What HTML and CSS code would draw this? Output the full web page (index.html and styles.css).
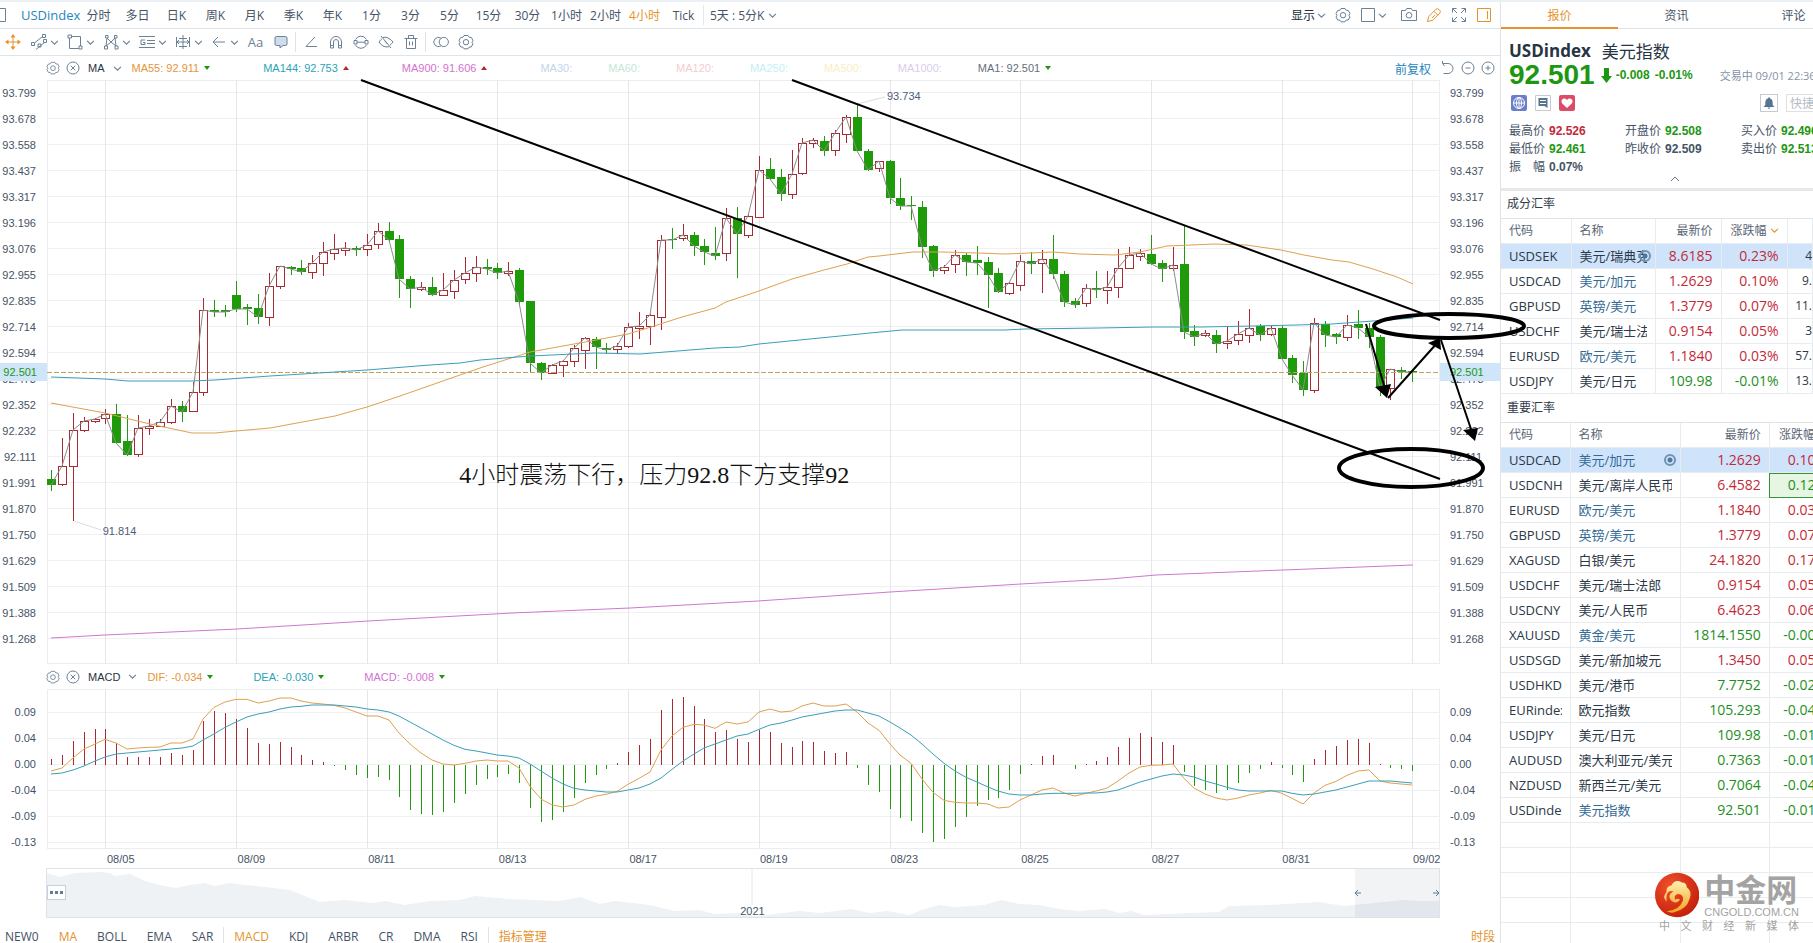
FILE: index.html
```html
<!DOCTYPE html>
<html lang="zh-CN">
<head>
    <meta charset="UTF-8">
    <meta name="viewport" content="width=device-width, initial-scale=1.0">
    <title>USDindex 美元指数</title>
    <link rel="stylesheet" href="styles.css">
</head>
<body>

    <!-- shared icons -->
    <svg class="sprite" aria-hidden="true">
        <symbol id="chev" viewBox="0 0 8 8"><path d="M1 2.5l3 3 3-3"/></symbol>
        <symbol id="gear" viewBox="0 0 16 16"><path d="M6 1.5h4l1.2 1.8 2.2.2 1.6 3.2-1.1 1.6L15 10l-1.8 3-2.1.1L10 14.8H6l-1.2-1.7-2.1-.1L1 10l1.1-1.7L1 6.6l1.7-3.1 2.1-.2z"/><circle cx="8" cy="8.2" r="2.7"/></symbol>
        <symbol id="close" viewBox="0 0 14 14"><circle cx="7" cy="7" r="6"/><path d="M4.7 4.7l4.6 4.6M9.3 4.7L4.7 9.3"/></symbol>
    </svg>

    <main class="main">
        <header class="topbar">
            <button class="frame-btn" aria-label="窗口"><svg width="7" height="14" viewBox="0 0 7 14"><path d="M0 .5h5.500v13H0"/></svg></button>
            <a class="symbol" href="#">USDindex</a>
            <nav class="periods">
                <button>分时</button>
                <button>多日</button>
                <button>日K</button>
                <button>周K</button>
                <button>月K</button>
                <button>季K</button>
                <button>年K</button>
                <button>1分</button>
                <button>3分</button>
                <button>5分</button>
                <button>15分</button>
                <button>30分</button>
                <button>1小时</button>
                <button>2小时</button>
                <button class="active">4小时</button>
                <button>Tick</button>
            </nav>
            <button class="custom">5天 : 5分K <svg class="chev"><use href="#chev"/></svg></button>
            <div class="top-actions">
                <button class="show">显示<svg class="chev"><use href="#chev"/></svg></button>
                <button aria-label="设置"><svg class="icon"><use href="#gear"/></svg></button>
                <button class="layout" aria-label="布局"><svg class="icon" viewBox="0 0 16 16"><path d="M1.500 1.500h13v13h-13z"/></svg><svg class="chev"><use href="#chev"/></svg></button>
                <button aria-label="截图"><svg class="icon" viewBox="0 0 16 16"><path d="M.5 3.500h4l1.200-2h4.600l1.200 2h4v10H.5z"/><circle cx="8" cy="8.300" r="2.800"/></svg></button>
                <button class="on" aria-label="画线"><svg class="icon" viewBox="0 0 16 16"><path d="M1.500 14.500l1.200-5L10 2.200q1.500-1.200 3 .3l.6.6q1.500 1.500.2 3L6.500 13.300zM8 4.300l4 4M6 11l3-3"/></svg></button>
                <button aria-label="全屏"><svg class="icon" viewBox="0 0 16 16"><path d="M5.500 1.500h-4v4M1.500 1.500l4.500 4.500M10.500 1.500h4v4M14.500 1.500L10 6M5.500 14.500h-4v-4M1.500 14.500L6 10M10.500 14.500h4v-4M14.500 14.500L10 10"/></svg></button>
                <button class="on" aria-label="侧栏"><svg class="icon" viewBox="0 0 16 16"><path d="M1.500 1.500h13v13h-13zM11.500 4v8"/></svg></button>
            </div>
        </header>

        <div class="tools">
            <button class="tool on" aria-label="移动"><svg class="icon" viewBox="0 0 16 16"><path d="M8 1v14M1 8h14"/><path class="solid" d="M8 0l2.500 3.500h-5zM8 16l2.500-3.500h-5zM0 8l3.500-2.500v5zM16 8l-3.500-2.500v5z"/></svg></button>
            <button class="tool drop" aria-label="直线"><svg class="icon" viewBox="0 0 16 16"><path d="M4 8.500L11 3M5 15.500L14 8M11.500.5h3v3h-3zM.5 8.500h3v3h-3zM12.500 5.500h3v3h-3zM7 10h3v3H7z"/></svg><svg class="chev"><use href="#chev"/></svg></button>
            <button class="tool drop" aria-label="矩形"><svg class="icon" viewBox="0 0 16 16"><path d="M2.500 4v10.500H12M4.500 2.500h9V12M1 1h3.500v3H1zM12 12h3v3h-3z"/></svg><svg class="chev"><use href="#chev"/></svg></button>
            <button class="tool drop" aria-label="形态"><svg class="icon" viewBox="0 0 16 16"><path d="M3 12L4 4l4 4 4-4 1 8-5-4zM1.500 12h3v3h-3zM2.500 1.500h2.500v2.500H2.500zM11.500 1.500h2.500v2.500h-2.500zM12 12h3v3h-3z"/></svg><svg class="chev"><use href="#chev"/></svg></button>
            <button class="tool drop" aria-label="斐波那契"><svg class="icon" viewBox="0 0 16 16"><path d="M0 2.500h16M8 6.500h8M8 9.500h8M0 13.500h16M6 6H2v4.500h4V8.500H4"/></svg><svg class="chev"><use href="#chev"/></svg></button>
            <button class="tool drop" aria-label="测量"><svg class="icon" viewBox="0 0 16 16"><path d="M8 1v14M1.500 3v10M14.500 3v10M2 8h12M4 4.500h8M4 12.500h8M4 6L2 8l2 2M12 6l2 2-2 2"/></svg><svg class="chev"><use href="#chev"/></svg></button>
            <button class="tool drop" aria-label="箭头"><svg class="icon" viewBox="0 0 16 16"><path d="M2 8h12M7 3L2 8l5 5"/></svg><svg class="chev"><use href="#chev"/></svg></button>
            <button class="tool text" aria-label="文字">Aa</button>
            <button class="tool" aria-label="注释"><svg class="icon bubble" viewBox="0 0 16 16"><path d="M3.500 2.500h9q1.500 0 1.500 1.500v6q0 1.500-1.500 1.500H10L7 14v-2.500H3.500Q2 11.500 2 10V4q0-1.500 1.500-1.500z"/></svg></button>
            <i class="rule"></i>
            <button class="tool" aria-label="角度"><svg class="icon" viewBox="0 0 16 16"><path d="M12 3L3 12.500h11"/></svg></button>
            <button class="tool" aria-label="磁铁"><svg class="icon" viewBox="0 0 16 16"><path d="M2.500 14V8a5.500 5.500 0 0 1 11 0v6h-3V8a2.500 2.500 0 0 0-5 0v6zM2.500 11.500h3M10.500 11.500h3"/></svg></button>
            <button class="tool" aria-label="连续"><svg class="icon" viewBox="0 0 16 16"><path d="M2.500 5.500a6.200 6.200 0 0 1 11 0M2.500 11a6.200 6.200 0 0 0 11 0M4 8.200h8M1 6.500h3V10H1zM12 6.500h3V10h-3z"/></svg></button>
            <button class="tool" aria-label="隐藏"><svg class="icon" viewBox="0 0 16 16"><path d="M3 2l10 12M5 3.500Q8 2.500 11 4.500q2.500 1.500 4 3.500-1.500 2-3 3.200M11 12.800Q8 13.500 5 12 2.500 10.500 1 8q1.500-2.200 3-3.300M6.500 6.500l3 3.500"/></svg></button>
            <button class="tool" aria-label="删除"><svg class="icon" viewBox="0 0 16 16"><path d="M1.500 4.500h13M5.500 4V1.500h5V4M3.500 5v9.500h9V5M6.500 7.500v4M9.500 7.500v4"/></svg></button>
            <i class="rule"></i>
            <button class="tool" aria-label="对比"><svg class="icon" viewBox="0 0 16 16"><path d="M8 4.200a4.600 4.600 0 1 0 0 7.600"/><circle cx="10.800" cy="8" r="4.600"/></svg></button>
            <button class="tool" aria-label="设置"><svg class="icon"><use href="#gear"/></svg></button>
        </div>

        <div class="legend">
            <button aria-label="指标设置"><svg class="icon small"><use href="#gear"/></svg></button>
            <button aria-label="关闭指标"><svg class="icon small"><use href="#close"/></svg></button>
            <button class="name">MA<svg class="chev"><use href="#chev"/></svg></button>
            <span class="ind orange down">MA55: 92.911</span>
            <span class="ind cyan up">MA144: 92.753</span>
            <span class="ind pink up">MA900: 91.606</span>
            <span class="ind off ma30">MA30:</span>
            <span class="ind off ma60">MA60:</span>
            <span class="ind off ma120">MA120:</span>
            <span class="ind off ma250">MA250:</span>
            <span class="ind off ma500">MA500:</span>
            <span class="ind off ma1000">MA1000:</span>
            <span class="ind gray down">MA1: 92.501</span>
            <div class="legend-right">
                <a href="#">前复权</a>
                <button aria-label="撤销"><svg class="icon small" viewBox="0 0 14 14"><path d="M1.500 2.500H7a4.700 4.700 0 0 1 0 10H2.500M1.500 0v2.500l2 2.500"/></svg></button>
                <button aria-label="缩小"><svg class="icon small" viewBox="0 0 14 14"><circle cx="7" cy="7" r="6"/><path d="M4.500 7h5"/></svg></button>
                <button aria-label="放大"><svg class="icon small" viewBox="0 0 14 14"><circle cx="7" cy="7" r="6"/><path d="M4.500 7h5M7 4.500v5"/></svg></button>
            </div>
        </div>

        <section class="pane price-pane">
            <div class="axis left" data-axis="price"></div>
            <div class="plot">
                <svg id="priceChart" viewBox="0 0 1393 584" preserveAspectRatio="none"></svg>
                <span class="mark high">93.734</span>
                <span class="mark low">91.814</span>
                <p class="note">4小时震荡下行，压力92.8下方支撑92</p>
                <svg class="drawing" viewBox="0 0 1393 584" preserveAspectRatio="none">
                    <path class="trend" d="M314 0L1393 399M745 0L1393 240"/>
                    <ellipse cx="1402" cy="246" rx="75" ry="12"/>
                    <ellipse cx="1364" cy="388" rx="72" ry="19"/>
                    <path class="arrow" d="M1319 244L1339 312M1341 318L1391 262M1394 260L1426 355"/>
                    <path class="head" d="M1328 307l16-3-4 14zM1393 258l1 12-13-7zM1416 350l15-2-3 13z"/>
                </svg>
            </div>
            <div class="axis right" data-axis="price"></div>
        </section>

        <div class="legend macd-legend">
            <button aria-label="指标设置"><svg class="icon small"><use href="#gear"/></svg></button>
            <button aria-label="关闭指标"><svg class="icon small"><use href="#close"/></svg></button>
            <button class="name">MACD<svg class="chev"><use href="#chev"/></svg></button>
            <span class="ind orange down">DIF: -0.034</span>
            <span class="ind cyan down">DEA: -0.030</span>
            <span class="ind pink down">MACD: -0.008</span>
        </div>

        <section class="pane macd-pane">
            <div class="axis left" data-axis="macd"></div>
            <div class="plot"><svg id="macdChart" viewBox="0 0 1393 160" preserveAspectRatio="none"></svg></div>
            <div class="axis right" data-axis="macd"></div>
        </section>

        <div class="dates">
            <span>08/05</span><span>08/09</span><span>08/11</span><span>08/13</span><span>08/17</span><span>08/19</span><span>08/23</span><span>08/25</span><span>08/27</span><span>08/31</span><span>09/02</span>
        </div>

        <section class="navigator">
            <svg id="navChart" viewBox="0 0 1393 48" preserveAspectRatio="none"></svg>
            <button class="more" aria-label="更多"><svg width="13" height="3" viewBox="0 0 13 3"><path d="M0 0h3v3H0zM5 0h3v3H5zM10 0h3v3h-3z"/></svg></button>
            <span class="year">2021</span>
            <div class="range"><svg width="6" height="6" viewBox="0 0 6 6"><path d="M0 3h6M3 0L0 3l3 3"/></svg><svg width="6" height="6" viewBox="0 0 6 6"><path d="M0 3h6M3 0l3 3-3 3"/></svg></div>
        </section>

        <footer class="indicators">
            <button>NEW0</button>
            <button class="active">MA</button>
            <button>BOLL</button>
            <button>EMA</button>
            <button>SAR</button>
            <i class="rule"></i>
            <button class="active">MACD</button>
            <button>KDJ</button>
            <button>ARBR</button>
            <button>CR</button>
            <button>DMA</button>
            <button>RSI</button>
            <i class="rule"></i>
            <button class="active">指标管理</button>
            <button class="active session">时段</button>
        </footer>
    </main>

    <aside class="side">
        <nav class="side-tabs">
            <button class="active">报价</button>
            <button>资讯</button>
            <button>评论</button>
        </nav>

        <div class="quote">
            <h1>USDindex <span>美元指数</span></h1>
            <div class="last">
                <strong>92.501</strong>
                <svg width="11" height="15" viewBox="0 0 11 15"><path d="M3 0h5v8h3l-5.500 7L0 8h3z"/></svg>
                <b>-0.008</b>
                <b>-0.01%</b>
                <time>交易中 09/01 22:36</time>
            </div>
            <div class="badges">
                <svg width="16" height="16" viewBox="0 0 16 16"><rect width="16" height="16" rx="2" fill="#6b7fc8"/><g fill="none" stroke="#fff"><circle cx="8" cy="8" r="5.500"/><ellipse cx="8" cy="8" rx="2.500" ry="5.500"/><path d="M2.500 8h11M8 2.500v11"/></g></svg>
                <svg width="16" height="16" viewBox="0 0 16 16"><path fill="#fff" stroke="#c3ccd4" d="M.5.5h15v15H.5z"/><path fill="#54758f" d="M3.500 3h9v10l-3-2h-6z"/><path stroke="#fff" d="M5 5.500h6M5 8.500h6"/></svg>
                <svg width="16" height="16" viewBox="0 0 16 16"><rect width="16" height="16" rx="2" fill="#dc4c66"/><path fill="#fff" d="M8 13L3 8.200Q1.500 5.800 3.300 4.200 5.800 2.500 8 5q2.200-2.500 4.700-.8 1.800 1.600.3 4z"/></svg>
                <button class="bell" aria-label="提醒"><svg width="12" height="12" viewBox="0 0 12 12"><path d="M6 0l1 1.200q2.700 1 2.700 4V8l1.800 2H.5l1.800-2V5.200q0-3 2.700-4zM4.500 10.500h3L6 12z"/></svg></button>
                <input type="text" placeholder="快捷" aria-label="快捷">
            </div>
            <dl class="stats">
                <div><dt>最高价</dt><dd class="red">92.526</dd></div>
                <div><dt>开盘价</dt><dd class="green">92.508</dd></div>
                <div><dt>买入价</dt><dd class="green">92.496</dd></div>
                <div><dt>最低价</dt><dd class="green">92.461</dd></div>
                <div><dt>昨收价</dt><dd>92.509</dd></div>
                <div><dt>卖出价</dt><dd class="green">92.513</dd></div>
                <div><dt>振　幅</dt><dd>0.07%</dd></div>
            </dl>
            <button class="fold" aria-label="收起"><svg width="10" height="6" viewBox="0 0 10 6"><path d="M1 5l4-4 4 4"/></svg></button>
        </div>

        <h2>成分汇率</h2>
        <table class="rates parts">
            <colgroup><col class="c1"><col class="c2"><col class="c3"><col class="c4"><col></colgroup>
            <thead>
                <tr><th>代码</th><th>名称</th><th>最新价</th><th>涨跌幅<svg class="chev"><use href="#chev"/></svg></th><th></th></tr>
            </thead>
            <tbody>
                <tr class="selected"><td><span>USDSEK</span></td><td><span>美元/瑞典克</span><i class="eye"></i></td><td class="red">8.6185</td><td class="red">0.23%</td><td>4</td></tr>
                <tr><td><span>USDCAD</span></td><td class="blue"><span>美元/加元</span></td><td class="red">1.2629</td><td class="red">0.10%</td><td>9.</td></tr>
                <tr><td><span>GBPUSD</span></td><td class="blue"><span>英镑/美元</span></td><td class="red">1.3779</td><td class="red">0.07%</td><td>11.</td></tr>
                <tr><td><span>USDCHF</span></td><td><span>美元/瑞士法郎</span></td><td class="red">0.9154</td><td class="red">0.05%</td><td>3</td></tr>
                <tr><td><span>EURUSD</span></td><td class="blue"><span>欧元/美元</span></td><td class="red">1.1840</td><td class="red">0.03%</td><td>57.</td></tr>
                <tr><td><span>USDJPY</span></td><td><span>美元/日元</span></td><td class="green">109.98</td><td class="green">-0.01%</td><td>13.</td></tr>
            </tbody>
        </table>

        <h2>重要汇率</h2>
        <table class="rates major">
            <colgroup><col class="c1"><col class="c2"><col class="c3"><col class="c4"></colgroup>
            <thead>
                <tr><th>代码</th><th>名称</th><th>最新价</th><th>涨跌幅<svg class="chev"><use href="#chev"/></svg></th></tr>
            </thead>
            <tbody>
                <tr class="selected"><td><span>USDCAD</span></td><td class="blue"><span>美元/加元</span><i class="eye"></i></td><td class="red">1.2629</td><td class="red">0.10%</td></tr>
                <tr><td><span>USDCNH</span></td><td><span>美元/离岸人民币</span></td><td class="red">6.4582</td><td class="green flash">0.12%</td></tr>
                <tr><td><span>EURUSD</span></td><td class="blue"><span>欧元/美元</span></td><td class="red">1.1840</td><td class="red">0.03%</td></tr>
                <tr><td><span>GBPUSD</span></td><td class="blue"><span>英镑/美元</span></td><td class="red">1.3779</td><td class="red">0.07%</td></tr>
                <tr><td><span>XAGUSD</span></td><td><span>白银/美元</span></td><td class="red">24.1820</td><td class="red">0.17%</td></tr>
                <tr><td><span>USDCHF</span></td><td><span>美元/瑞士法郎</span></td><td class="red">0.9154</td><td class="red">0.05%</td></tr>
                <tr><td><span>USDCNY</span></td><td><span>美元/人民币</span></td><td class="red">6.4623</td><td class="red">0.06%</td></tr>
                <tr><td><span>XAUUSD</span></td><td class="blue"><span>黄金/美元</span></td><td class="green">1814.1550</td><td class="green">-0.00%</td></tr>
                <tr><td><span>USDSGD</span></td><td><span>美元/新加坡元</span></td><td class="red">1.3450</td><td class="red">0.05%</td></tr>
                <tr><td><span>USDHKD</span></td><td><span>美元/港币</span></td><td class="green">7.7752</td><td class="green">-0.02%</td></tr>
                <tr><td><span>EURindex</span></td><td><span>欧元指数</span></td><td class="green">105.293</td><td class="green">-0.04%</td></tr>
                <tr><td><span>USDJPY</span></td><td><span>美元/日元</span></td><td class="green">109.98</td><td class="green">-0.01%</td></tr>
                <tr><td><span>AUDUSD</span></td><td><span>澳大利亚元/美元</span></td><td class="green">0.7363</td><td class="green">-0.01%</td></tr>
                <tr><td><span>NZDUSD</span></td><td><span>新西兰元/美元</span></td><td class="green">0.7064</td><td class="green">-0.04%</td></tr>
                <tr><td><span>USDindex</span></td><td class="blue"><span>美元指数</span></td><td class="green">92.501</td><td class="green">-0.01%</td></tr>
                <tr><td></td><td></td><td></td><td></td></tr>
                <tr><td></td><td></td><td></td><td></td></tr>
                <tr><td></td><td></td><td></td><td></td></tr>
                <tr><td></td><td></td><td></td><td></td></tr>
                <tr><td></td><td></td><td></td><td></td></tr>
            </tbody>
        </table>

        <div class="brand">
            <div class="brand-top">
                <svg width="46" height="46" viewBox="0 0 46 46">
                    <defs>
                        <radialGradient id="ball" cx="35%" cy="30%" r="75%"><stop offset="0" stop-color="#f0502a"/><stop offset="1" stop-color="#c41f0c"/></radialGradient>
                        <linearGradient id="gold" x2="0" y2="1"><stop offset="0" stop-color="#fff0b0"/><stop offset="1" stop-color="#f2a51c"/></linearGradient>
                    </defs>
                    <circle cx="23" cy="23" r="23" fill="url(#ball)"/>
                    <path fill="url(#gold)" d="M12 30Q7 25 12 20q-1-6 5-7 4-7 11-3 5 0 5 5 6 4 3 12-3 11-16 14-3 1-8-1 13-1 17-11 1-7-5-7-5 1-3 6 3-2 5 0-4 5-9 1-5-5 2-10-6-1-7 5z"/>
                </svg>
                <div>
                    <strong>中金网</strong>
                    <small>CNGOLD.COM.CN</small>
                </div>
            </div>
            <p><span>中</span><span>文</span><span>财</span><span>经</span><span>新</span><span>媒</span><span>体</span></p>
        </div>
    </aside>

    <script src="script.js"></script>
</body>
</html>
```
FILE: styles.css
```css
* {
    margin: 0;
    padding: 0;
    box-sizing: border-box;
}

body {
    display: flex;
    height: 100vh;
    overflow: hidden;
    background: #fff;
    border-top: 2px solid #eaf0f4;
    color: #465366;
    font-family: "Open Sans", "Noto Sans CJK SC", sans-serif;
    font-size: 12px;
}

button {
    display: flex;
    align-items: center;
    justify-content: center;
    background: none;
    border: none;
    color: inherit;
    font: inherit;
    white-space: nowrap;
    cursor: pointer;
}

a {
    color: #1f86bd;
    text-decoration: none;
}

.sprite {
    position: absolute;
    width: 0;
    height: 0;
}

.icon,
.chev {
    flex: none;
    width: 16px;
    height: 16px;
    fill: none;
    stroke: #6b8196;
}

.icon.small {
    width: 14px;
    height: 14px;
}

.chev {
    width: 9px;
    height: 9px;
}

.on .icon {
    stroke: #e5932c;
}

.on .solid {
    fill: #e5932c;
    stroke: none;
}

.rule {
    flex: none;
    width: 1px;
    height: 20px;
    background: #dfe4e8;
}

.red { color: #c22a38; }
.green { color: #1d9712; }
.blue { color: #336a96; }

/* left part */
.main {
    position: relative;
    z-index: 1;
    flex: 1;
    min-width: 0;
    display: flex;
    flex-direction: column;
}

.topbar,
.tools {
    flex: none;
    display: flex;
    align-items: center;
    height: 27px;
    border-bottom: 1px solid #e0e4e8;
}

.frame-btn svg {
    fill: none;
    stroke: #6b8196;
}

.symbol {
    width: 72px;
    padding-left: 14px;
    font-size: 13px;
}

.periods {
    display: flex;
    border-right: 1px solid #e4e8eb;
}

.periods button {
    width: 39px;
    height: 20px;
}

.active {
    color: #e5932c;
}

.custom {
    gap: 4px;
    margin-left: 6px;
}

.top-actions {
    display: flex;
    align-items: center;
    gap: 9px;
    margin-left: auto;
    padding-right: 8px;
}

.top-actions .show {
    gap: 2px;
    color: #222c38;
}

.layout {
    gap: 2px;
    margin-right: 5px;
}

.tool {
    width: 25px;
    height: 24px;
}

.tool.drop {
    gap: 3px;
    width: 36px;
}

.tool.text {
    color: #6b8196;
    font-size: 13px;
}

.bubble {
    fill: #cfdcee;
}

.tool:first-child {
    margin-right: 2px;
}

.tools .rule {
    margin: 0 2px;
}

.legend {
    flex: none;
    display: flex;
    align-items: center;
    height: 24px;
    padding-left: 46px;
    font-family: "Liberation Sans", "Noto Sans CJK SC", sans-serif;
    font-size: 11px;
    white-space: nowrap;
}

.legend button + button {
    margin-left: 6px;
}

.legend .name {
    gap: 8px;
    margin: 0 10px 0 8px;
    color: #2b3440;
}

.ind {
    display: flex;
    align-items: center;
    gap: 5px;
    margin-right: 53px;
}

.ind.off {
    margin-right: 36px;
}

.macd-legend {
    height: 25px;
}

.macd-legend .ind {
    margin-right: 40px;
}

.ind.up::after,
.ind.down::after {
    content: "";
    border: 3px solid transparent;
}

.ind.up::after {
    border-top: none;
    border-bottom: 4px solid #b7282e;
}

.ind.down::after {
    border-bottom: none;
    border-top: 4px solid #219514;
}

.orange { color: #e3963a; }
.cyan { color: #2ba3b8; }
.pink { color: #d372cf; }
.gray { color: #66707c; }
.ma30 { color: #c2d5ea; }
.ma60 { color: #c3e8d6; }
.ma120 { color: #f3cdd2; }
.ma250 { color: #c2f0f4; }
.ma500 { color: #f8eec4; }
.ma1000 { color: #d9cdea; }

.legend-right {
    display: flex;
    align-items: center;
    margin-left: auto;
    padding-right: 5px;
}

.legend-right a {
    margin-right: 10px;
    font-size: 12px;
}

/* charts */
.pane {
    display: flex;
    font-family: "Liberation Sans", sans-serif;
    font-size: 11px;
}

.price-pane {
    flex: 1;
    min-height: 0;
}

.macd-pane {
    flex: none;
    height: 160px;
}

.plot {
    position: relative;
    flex: 1;
    min-width: 0;
    box-shadow: inset 0 0 0 1px #ebedf0;
}

.plot svg {
    display: block;
    position: absolute;
    width: 100%;
    height: 100%;
}

.axis {
    position: relative;
    flex: none;
    display: flex;
    flex-direction: column;
    width: 47px;
    padding: 0 11px 12px 0;
    text-align: right;
}

.axis.right {
    width: 60px;
    padding: 0 0 12px 10px;
    text-align: left;
}

.axis span {
    flex: 1;
    display: flex;
    align-items: center;
    justify-content: flex-end;
    line-height: 12px;
}

.axis.right span {
    justify-content: flex-start;
}

.macd-pane .axis {
    padding-top: 10px;
    padding-bottom: 0;
}

.macd-pane .axis span {
    flex: none;
    height: 26px;
}

.axis .tag {
    position: absolute;
    left: 0;
    right: 0;
    top: 48.5%;
    height: 18px;
    padding: 0 10px;
    background: #cfe5f9;
    color: #1d9712;
}

.mark {
    position: absolute;
    line-height: 14px;
    color: #4e5d78;
}

.mark.high {
    left: 60.3%;
    top: 1.5%;
}

.mark.low {
    left: 4%;
    top: 76%;
}

.note {
    position: absolute;
    left: 29.6%;
    top: 64.8%;
    color: #111;
    font-family: "Liberation Serif", "Noto Sans CJK SC", serif;
    font-size: 24px;
    font-weight: 300;
    line-height: 34px;
    white-space: nowrap;
}

.plot .drawing {
    z-index: 2;
    overflow: visible;
    fill: none;
    stroke: #000;
    stroke-width: 2;
    pointer-events: none;
}

.drawing ellipse {
    stroke-width: 4;
}

.plot .drawing .head {
    fill: #000;
    stroke: none;
}

.grid { fill: none; stroke: #eff0f2; shape-rendering: crispEdges; }
.grid.v { stroke: #e4e6ea; }
.line { fill: none; stroke-width: 1; }
.line.ma55 { stroke: #e0a050; }
.line.ma144 { stroke: #3a9fb8; }
.line.ma900 { stroke: #cf78cc; }
.line.close { stroke: #8c8c8c; }
.line.leader { stroke: #d8dde4; }
.now { fill: none; stroke: #c5a25a; stroke-dasharray: 5 2; shape-rendering: crispEdges; }
.rise { fill: none; stroke: #a82b34; shape-rendering: crispEdges; }
.rise.box { fill: #fff; }
.fall { fill: none; stroke: #229a10; shape-rendering: crispEdges; }
.fall.box { fill: #1f9a0a; stroke: none; }

.dates {
    flex: none;
    display: flex;
    height: 19px;
    margin: 0 60px 0 47px;
    padding-left: 60px;
    font-family: "Liberation Sans", sans-serif;
    font-size: 11px;
    line-height: 20px;
}

.dates span {
    flex: 1;
    min-width: 0;
}

.dates span:last-child {
    flex: none;
    width: 27px;
}

.navigator {
    position: relative;
    flex: none;
    height: 50px;
    margin: 0 60px 0 46px;
    border: 1px solid #dfe3e7;
    font-family: "Liberation Sans", sans-serif;
    font-size: 11px;
}

.navigator > svg {
    display: block;
    width: 100%;
    height: 100%;
}

.area { fill: #eef2f5; }

.more {
    position: absolute;
    left: 0;
    top: 16px;
    width: 19px;
    height: 15px;
    background: #fff;
    border: 1px solid #c5d0d8;
}

.more svg {
    fill: #5f7f96;
}

.year {
    position: absolute;
    left: 49.8%;
    bottom: 0;
    line-height: 12px;
}

.range {
    position: absolute;
    top: 0;
    right: 0;
    bottom: 0;
    width: 6%;
    display: flex;
    align-items: center;
    justify-content: space-between;
    background: rgba(120, 135, 155, 0.1);
}

.range svg {
    fill: none;
    stroke: #5f7790;
}

.indicators {
    flex: none;
    display: flex;
    align-items: flex-end;
    height: 25px;
    padding-right: 5px;
    line-height: 12px;
}

.indicators button {
    padding: 0 10px;
}

.indicators button:first-child {
    padding-left: 5px;
}

.indicators .rule {
    height: 16px;
}

.indicators .session {
    margin-left: auto;
    padding: 0;
}

/* right part */
.side {
    position: relative;
    flex: none;
    width: 313px;
    overflow: hidden;
    border-left: 1px solid #dfe3e7;
}

.side-tabs {
    display: flex;
    width: 351px;
    height: 27px;
    border-bottom: 1px solid #e0e4e8;
}

.side-tabs button {
    flex: 1;
    height: 27px;
    border-bottom: 2px solid transparent;
}

.side-tabs .active {
    border-bottom-color: #e5932c;
}

.quote {
    height: 162px;
    padding: 9px 0 0 8px;
    border-bottom: 3px solid #e6e8eb;
}

.quote h1 {
    display: flex;
    align-items: center;
    gap: 11px;
    height: 24px;
    color: #273444;
    font-size: 17px;
}

.quote h1 span {
    font-weight: 400;
}

.last {
    display: flex;
    align-items: center;
    height: 26px;
    color: #1d9712;
    font-family: "Liberation Sans", "Noto Sans CJK SC", sans-serif;
    white-space: nowrap;
}

.last strong {
    font-size: 28px;
}

.last svg {
    flex: none;
    margin: 0 4px 0 6px;
    fill: #1d9712;
}

.last b {
    margin-right: 5px;
}

.last time {
    margin-left: 22px;
    color: #8492a6;
    font-family: "Open Sans", "Noto Sans CJK SC", sans-serif;
    font-size: 11px;
}

.badges {
    display: flex;
    align-items: center;
    gap: 8px;
    height: 30px;
    padding-left: 2px;
}

.badges svg {
    flex: none;
}

.bell {
    flex: none;
    width: 18px;
    height: 18px;
    margin-left: 177px;
    border: 1px solid #c3ccd4;
}

.bell svg {
    fill: #54758f;
}

.badges input {
    flex: none;
    width: 60px;
    height: 18px;
    padding-left: 3px;
    border: 1px solid #dde1e5;
    font: inherit;
}

.badges input::placeholder {
    color: #b5bcc4;
}

.stats {
    display: grid;
    grid-template-columns: repeat(3, 116px);
    padding-top: 4px;
    line-height: 18px;
}

.stats div {
    display: flex;
    gap: 4px;
}

.stats dd {
    font-family: "Liberation Sans", sans-serif;
    font-weight: 700;
}

.fold {
    width: 332px;
}

.fold svg {
    fill: none;
    stroke: #6b7886;
}

.side h2 {
    height: 28px;
    padding-left: 6px;
    border-bottom: 1px solid #e0e4e8;
    color: #2f3b4a;
    font-size: 12px;
    font-weight: 400;
    line-height: 26px;
}

.rates {
    width: 335px;
    border-collapse: collapse;
    table-layout: fixed;
    color: #2c3948;
    font-size: 13px;
    white-space: nowrap;
}

.rates.parts {
    width: 312px;
    margin-bottom: 1px;
}

.parts .c1 { width: 70px; }
.parts .c2 { width: 84px; }
.parts .c3 { width: 66px; }
.parts .c4 { width: 66px; }
.major .c1 { width: 69px; }
.major .c2 { width: 110px; }
.major .c3 { width: 89px; }
.major .c4 { width: 66px; }

.rates tr {
    height: 25px;
    border-bottom: 1px solid #e9ecef;
}

.parts thead tr {
    height: 24px;
}

.rates th,
.rates td {
    position: relative;
    padding: 0 8px;
    border-right: 1px solid #e9ecef;
    line-height: 20px;
    text-align: right;
}

.rates td:nth-child(n+3) {
    font-size: 14px;
}

.rates th {
    color: #5a6675;
    font-size: 12px;
    font-weight: 400;
}

.rates th .chev {
    margin-left: 3px;
    stroke: #e5932c;
}

.rates th:nth-child(-n+2),
.rates td:nth-child(-n+2) {
    text-align: left;
}

.parts th:nth-child(5),
.parts td:nth-child(5) {
    padding: 0;
    font-size: 12px;
}

.rates td span {
    display: block;
    overflow: hidden;
}

.selected {
    background: #cfe4fb;
}

.rates .red { color: #c22a38; }
.rates .green { color: #1d8f22; }
.rates .blue { color: #336a96; }

.rates .flash {
    background: #e6f6e2;
    outline: 1px solid #35933a;
    outline-offset: -1px;
}

.eye {
    position: absolute;
    top: 6px;
    right: 4px;
    width: 12px;
    height: 12px;
    border: 2px solid #6f93b3;
    border-radius: 50%;
    background: radial-gradient(#4f779b 2px, transparent 3px);
}

.brand {
    position: absolute;
    right: 14px;
    bottom: 9px;
    width: 140px;
    color: #a3a3a3;
}

.brand-top {
    display: flex;
    gap: 5px;
    margin-left: -4px;
}

.brand-top div {
    display: flex;
    flex-direction: column;
}

.brand strong {
    font-size: 31px;
    font-weight: 700;
    line-height: 34px;
}

.brand small {
    font-family: "Liberation Sans", sans-serif;
    font-size: 11px;
    line-height: 12px;
}

.brand p {
    display: flex;
    justify-content: space-between;
    font-size: 11px;
    line-height: 16px;
}
```
FILE: script.js
```js
const STEP = 10.89;
const FIRST = 4;

const axes = {
    price: ["93.799", "93.678", "93.558", "93.437", "93.317", "93.196", "93.076", "92.955", "92.835", "92.714", "92.594",
        "92.473", "92.352", "92.232", "92.111", "91.991", "91.870", "91.750", "91.629", "91.509", "91.388", "91.268"],
    macd: ["0.09", "0.04", "0.00", "-0.04", "-0.09", "-0.13"]
};

// type, high, body top, body bottom, low
const candles = `
g 470 479 485 491|r 438 466 484 486|r 413 430 466 521|r 417 421 430 432|r 418 419 421 423|r 409 414 418 424
g 404 414 443 443|g 415 441 455 456|r 415 428 454 457|r 419 426 428 435|r 419 422 426 427|r 399 406 422 424
g 401 406 412 422|r 382 392 411 412|r 298 310 392 396|g 300 310 312 317|g 305 310 312 317|g 281 295 309 312
g 304 307 309 325|g 294 308 317 324|r 273 286 317 326|r 266 266 286 289|g 266 267 269 275|g 260 268 272 275
r 255 263 272 279|r 242 252 263 276|r 234 249 253 260|r 242 248 250 256|g 246 248 250 256|r 234 245 249 256
r 223 231 244 249|g 222 231 240 242|g 235 239 279 298|g 276 279 289 308|r 282 287 289 291|g 277 287 295 296
r 273 290 295 296|r 270 280 291 299|r 257 273 279 284|r 256 267 273 282|g 259 267 269 275|g 263 268 273 279
r 262 271 273 276|g 268 270 302 306|g 301 301 363 372|g 362 363 373 380|r 364 365 373 373|r 360 361 365 377
r 345 348 361 367|r 337 338 350 369|g 337 339 347 369|g 343 348 350 354|r 343 346 349 353|r 323 327 346 348
r 312 326 328 339|r 314 315 326 345|r 235 240 317 330|g 228 239 240 249|r 224 235 238 241|g 232 235 246 256
g 239 246 252 265|g 227 253 256 260|r 208 218 253 261|g 207 218 234 278|r 215 216 235 238|r 156 170 217 218
g 158 169 179 180|g 169 177 194 201|r 150 174 194 199|r 138 143 173 175|r 138 140 143 148|g 136 141 151 156
r 130 133 150 156|r 115 117 134 143|g 105 117 151 151|g 149 151 170 171|r 161 161 168 172|g 160 161 198 204
g 178 198 206 210|g 196 205 206 220|g 201 207 247 258|g 245 246 271 277|r 265 267 270 274|r 250 255 264 273
g 253 255 262 276|g 246 260 263 275|g 257 262 275 308|g 268 273 292 293|r 282 283 293 295|r 255 261 285 291
g 252 261 264 274|r 250 259 263 293|g 235 259 274 279|g 271 274 302 307|g 298 301 305 308|r 284 288 303 307
g 271 288 290 298|r 271 287 290 304|r 249 268 287 298|r 247 255 268 269|r 249 253 256 261|g 235 254 264 265
g 260 263 269 282|r 247 265 268 271|g 225 264 332 339|g 325 331 337 346|r 330 333 335 337|g 330 335 344 353
r 327 341 343 349|r 321 334 340 345|r 309 328 335 343|g 324 326 335 341|r 325 328 334 336|g 326 328 359 359
g 355 358 375 383|g 361 373 390 396|r 318 323 390 393|g 321 324 335 347|g 333 334 337 344|r 315 325 337 341
g 310 324 328 339|g 323 328 337 348|g 335 337 388 396|r 369 369 388 400|g 367 370 372 379|g 370 371 372 382
`.trim().split(/[|\n]/).map(row => {
    const [type, ...v] = row.split(" ");
    return [type, ...v.map(n => n - 80)];
});

const ma55 = "4,323 58,333 103,344 145,353 168,353 189,351 223,348 288,336 320,327 353,316 393,302 433,288 483,272 549,260 581,254 604,247 635,237 668,228 679,222 712,211 745,199 777,190 800,184 821,177 832,176 866,172 896,172 930,173 958,174 1006,172 1033,174 1068,175 1093,172 1120,166 1168,164 1199,165 1234,170 1257,175 1285,180 1302,182 1326,189 1350,197 1366,204";
const ma144 = "4,297 58,299 81,301 143,301 168,300 223,296 320,290 383,285 413,283 433,280 483,276 548,273 593,274 668,268 693,267 712,264 783,257 823,253 855,250 958,250 978,249 1051,248 1106,247 1154,247 1206,246 1250,245 1285,244 1326,241 1366,238";
const ma900 = "4,558 58,555 190,549 321,541 465,533 583,528 711,521 843,512 974,504 1063,499 1109,495 1236,490 1366,485";

const macd = [6, 10, 24, 33, 36, 36, 22, 8, 8, 8, 8, 12, 10, 15, 44, 54, 52, 46, 37, 22, 21, 23, 18, 10, 5, 3, -1, -5, -10, -13,
    -12, -15, -32, -45, -49, -50, -47, -38, -29, -20, -14, -12, -9, -18, -43, -57, -55, -47, -33, -18, -10, -4, 2, 13, 20, 26,
    55, 66, 68, 59, 46, 33, 35, 26, 23, 35, 33, 22, 18, 24, 23, 14, 12, 13, -3, -20, -27, -44, -53, -56, -68, -77, -74, -62,
    -52, -41, -35, -33, -25, -9, 1, 9, 10, 0, -4, 1, 4, 8, 18, 27, 32, 28, 23, 20, -7, -21, -25, -28, -25, -18, -8, -4, 3, -3,
    -10, -17, 6, 15, 19, 25, 26, 22, 1, -3, -4, -6];

const dif = [361, 352, 322, 295, 280, 266, 277, 295, 292, 290, 289, 277, 277, 265, 205, 170, 154, 146, 146, 157, 151, 142, 142,
    151, 157, 160, 164, 172, 184, 196, 196, 208, 247, 280, 307, 328, 340, 343, 338, 331, 328, 331, 331, 352, 407, 445, 463, 469,
    463, 446, 436, 431, 422, 401, 383, 364, 298, 256, 230, 221, 223, 233, 214, 220, 214, 184, 175, 184, 181, 166, 157, 166, 166,
    160, 184, 217, 239, 280, 313, 338, 385, 425, 449, 455, 457, 457, 460, 472, 469, 448, 433, 418, 412, 427, 436, 428, 421, 412,
    391, 367, 349, 344, 343, 340, 383, 412, 430, 442, 448, 442, 433, 427, 419, 428, 443, 460, 427, 404, 392, 374, 361, 358, 391,
    397, 400, 403];

const dea = [370, 367, 358, 346, 331, 319, 310, 307, 304, 301, 298, 295, 292, 286, 268, 250, 230, 214, 199, 190, 184, 175, 169,
    167, 163, 163, 163, 166, 169, 175, 178, 184, 196, 214, 232, 250, 268, 284, 296, 301, 307, 313, 316, 322, 340, 361, 382, 400,
    413, 418, 421, 424, 424, 418, 412, 400, 382, 356, 331, 310, 292, 280, 268, 256, 250, 236, 223, 217, 208, 199, 193, 187, 181,
    178, 178, 187, 196, 214, 232, 253, 280, 310, 338, 361, 380, 394, 409, 421, 430, 433, 433, 430, 428, 428, 428, 427, 427, 424,
    418, 406, 394, 385, 376, 370, 373, 379, 391, 400, 410, 418, 421, 421, 421, 421, 428, 433, 430, 424, 418, 409, 400, 391, 391,
    391, 394, 397];

// overview outline, x then y
const overview = [0, 4, 13, 8, 28, 4, 53, 3, 63, 4, 68, 7, 83, 5, 98, 12, 113, 16, 129, 19, 143, 16, 158, 14, 168, 17, 183, 14,
    198, 16, 218, 18, 243, 21, 258, 27, 273, 33, 298, 31, 325, 34, 338, 32, 358, 36, 383, 32, 413, 31, 428, 27, 463, 30, 513, 32,
    534, 28, 553, 35, 568, 32, 603, 36, 628, 42, 653, 41, 668, 45, 693, 44, 710, 47, 728, 45, 753, 42, 773, 44, 805, 40, 823, 44,
    841, 42, 863, 46, 878, 40, 893, 36, 908, 38, 938, 36, 955, 31, 973, 35, 993, 36, 1013, 40, 1033, 42, 1058, 40, 1073, 44,
    1085, 42, 1098, 46, 1123, 45, 1143, 44, 1173, 43, 1183, 37, 1223, 36, 1273, 33, 1298, 37, 1328, 34, 1358, 31, 1373, 32, 1393, 32];

const xAt = i => Math.round(FIRST + i * STEP);

function gridLines(top, rows, height) {
    let h = "", v = "";
    for (let r = 0; r < rows; r++) h += `M0 ${top + r * 26}.5H1393`;
    for (let i = 5; i < 126; i += 12) v += `M${xAt(i)}.5 0V${height}`;
    return `<path class="grid" d="${h}"/><path class="grid v" d="${v}"/>`;
}

function drawPrice() {
    let out = gridLines(12, 22, 584);
    const closes = [];
    candles.forEach(([type, high, top, bottom, low], i) => {
        const x = xAt(i);
        const h = Math.max(bottom - top, 1);
        if (type === "g") {
            out += `<path class="fall" d="M${x}.5 ${high}V${low}"/><rect class="fall box" x="${x - 4}" y="${top}" width="9" height="${h}"/>`;
            closes.push(`${x},${bottom}`);
        } else {
            out += `<path class="rise" d="M${x}.5 ${high}V${low}"/><rect class="rise box" x="${x - 3.5}" y="${top + 0.5}" width="8" height="${h}"/>`;
            closes.push(`${x},${top}`);
        }
    });
    out += `<path class="now" d="M0 292.500H1393"/>`;
    out += `<path class="line leader" d="M810 24L838 17M27 441L54 450"/>`;
    out += `<polyline class="line close" points="${closes.join(" ")}"/>`;
    out += `<polyline class="line ma55" points="${ma55}"/>`;
    out += `<polyline class="line ma144" points="${ma144}"/>`;
    out += `<polyline class="line ma900" points="${ma900}"/>`;
    document.getElementById("priceChart").innerHTML = out;
}

function drawMacd() {
    let out = gridLines(23, 6, 160);
    macd.forEach((v, i) => {
        if (v) out += `<path class="${v > 0 ? "rise" : "fall"}" d="M${xAt(i)}.5 76v${-v}"/>`;
    });
    const points = list => list.map((v, i) => `${xAt(i)},${(v - 115) / 3}`).join(" ");
    out += `<polyline class="line ma55" points="${points(dif)}"/>`;
    out += `<polyline class="line ma144" points="${points(dea)}"/>`;
    document.getElementById("macdChart").innerHTML = out;
}

function drawOverview() {
    let d = "M0 48";
    for (let i = 0; i < overview.length; i += 2) d += `L${overview[i]} ${overview[i + 1]}`;
    document.getElementById("navChart").innerHTML =
        `<path class="area" d="${d}L1393 48z"/><path class="grid v" d="M705.5 0V36"/>`;
}

document.querySelectorAll(".axis").forEach(axis => {
    const name = axis.dataset.axis;
    axis.innerHTML = axes[name].map(t => `<span>${t}</span>`).join("");
    if (name === "price") axis.innerHTML += `<span class="tag">92.501</span>`;
});

drawPrice();
drawMacd();
drawOverview();
```
